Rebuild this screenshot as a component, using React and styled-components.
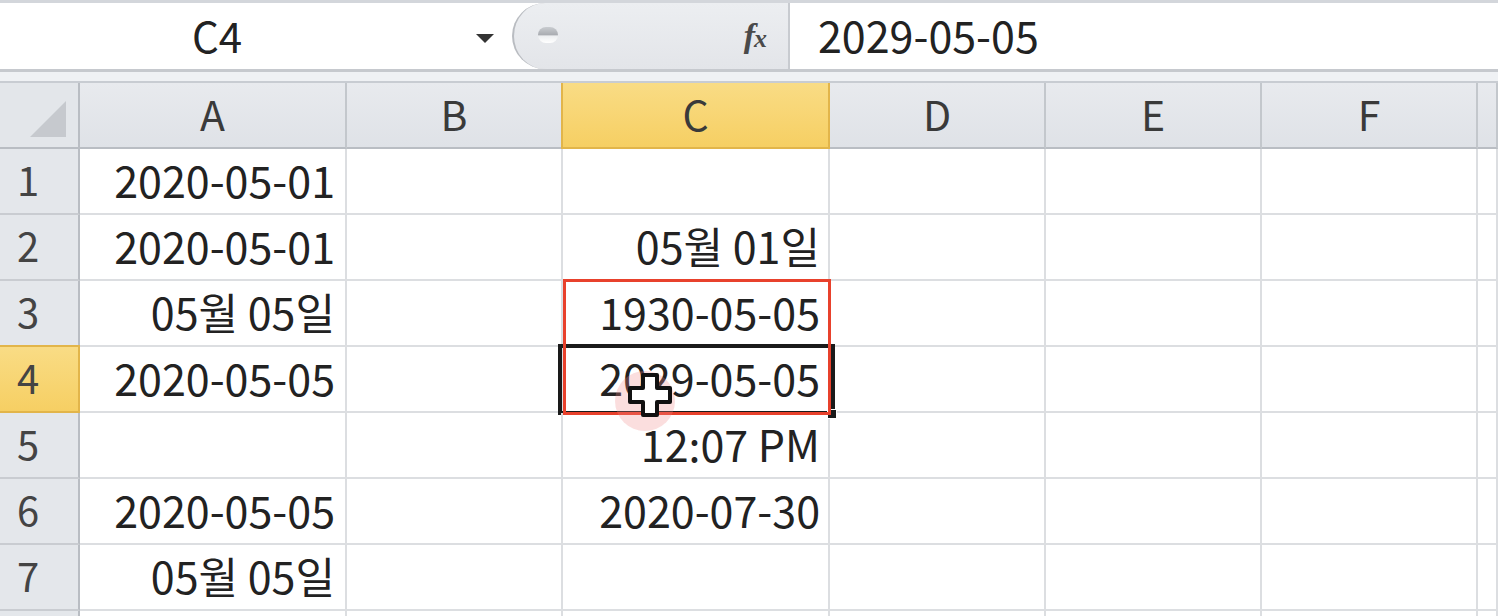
import React from 'react'
import styled, { createGlobalStyle } from 'styled-components'

const GlobalStyle = createGlobalStyle`
  html, body { margin: 0; padding: 0; background: #fff; overflow: hidden; }
  body { font-family: "Noto Sans CJK KR", "Noto Sans", sans-serif; }
`

const Page = styled.div`
  width: 1498px;
  height: 616px;
  overflow: hidden;
  position: relative;
  background: #fff;
`

const FormulaBar = styled.div`
  display: flex;
  height: 66px;
  border-top: 3px solid #d3d6db;
  border-bottom: 3px solid #c6c9ce;
  background: #fff;
`

const NameBox = styled.div`
  width: 512px;
  display: flex;
  align-items: center;
  position: relative;
  font-size: 42px;
  color: #222;
  padding-bottom: 4px;
  box-sizing: border-box;
  span { margin-left: 192px; }
`

const DropArrow = styled.div`
  position: absolute;
  left: 476px;
  top: 31px;
  width: 0;
  height: 0;
  border-left: 9px solid transparent;
  border-right: 9px solid transparent;
  border-top: 9px solid #333;
`

const FxArea = styled.div`
  width: 278px;
  position: relative;
  background: linear-gradient(#eceef1, #e3e5e9);
  border-radius: 40px 0 0 40px;
  border-left: 2px solid #b9bcc1;
  border-right: 2px solid #c8cbd0;
  display: flex;
  align-items: center;
  justify-content: flex-end;
  box-sizing: border-box;
`

const Grip = styled.div`
  position: absolute;
  left: 24px;
  top: 24px;
  width: 20px;
  height: 16px;
  border-radius: 8px;
  background: linear-gradient(#c9ccd0 0%, #a9acb1 50%, #eceef0 55%, #fff 100%);
`

const Fx = styled.div`
  font-family: "Liberation Serif", serif;
  font-style: italic;
  font-weight: bold;
  font-size: 34px;
  color: #4a4a4a;
  margin-right: 22px;
  letter-spacing: -1px;
  span { font-size: 26px; }
`

const FormulaInput = styled.div`
  flex: 1;
  display: flex;
  align-items: center;
  padding-left: 28px;
  padding-bottom: 4px;
  font-size: 43px;
  color: #222;
`

const Gap = styled.div`
  height: 9px;
  background: #eff1f4;
  border-bottom: 2px solid #c8ccd2;
`

const Sheet = styled.div`
  position: relative;
  display: grid;
  grid-template-columns: 80px 267px 216px 267px 216px 216px 216px 1fr;
  grid-auto-rows: 66px;
`

const Corner = styled.div`
  background: #e3e6ea;
  border-right: 2px solid #b9bdc3;
  border-bottom: 2px solid #b9bdc3;
  position: relative;
  &::after {
    content: '';
    position: absolute;
    right: 12px;
    bottom: 10px;
    width: 0;
    height: 0;
    border-left: 36px solid transparent;
    border-bottom: 36px solid #c6c9ce;
  }
`

const ColHead = styled.div`
  background: ${p => (p.$active ? 'linear-gradient(#f9dc85, #f6cf63)' : 'linear-gradient(#e8eaee, #dfe2e7)')};
  border-right: 2px solid ${p => (p.$active ? '#e2b54a' : '#c3c7cc')};
  border-bottom: 2px solid ${p => (p.$active ? '#e2b54a' : '#b9bdc3')};
  ${p => p.$active && 'border-left: 2px solid #e2b54a; margin-left: -2px;'}
  display: flex;
  align-items: center;
  justify-content: center;
  padding-bottom: 4px;
  font-size: 41px;
  color: #3a3a3a;
`

const RowHead = styled.div`
  background: ${p => (p.$active ? 'linear-gradient(#f9dc85, #f6cf63)' : '#e4e7eb')};
  border-right: 2px solid ${p => (p.$active ? '#e2b54a' : '#b9bdc3')};
  border-bottom: 2px solid ${p => (p.$active ? '#e2b54a' : '#c9ccd1')};
  ${p => p.$active && 'border-top: 2px solid #e2b54a; margin-top: -2px;'}
  display: flex;
  align-items: center;
  justify-content: center;
  padding-right: 22px;
  padding-bottom: 4px;
  font-size: 40px;
  color: #444;
`

const Cell = styled.div`
  position: relative;
  border-right: 2px solid #dcdee1;
  border-bottom: 2px solid #dcdee1;
  display: flex;
  align-items: center;
  justify-content: flex-end;
  padding-right: ${p => (p.$wide ? 8 : 10)}px;
  padding-bottom: 4px;
  font-size: 43px;
  color: #222;
  white-space: nowrap;
  ${p =>
    p.$selected &&
    `
    &::after {
      content: '';
      position: absolute;
      left: -5px; top: -3px; right: -7px; bottom: -4px;
      border: 4px solid #1a1a1a;
    }
    &::before {
      content: '';
      position: absolute;
      right: -9px; bottom: -8px;
      width: 8px; height: 8px;
      background: #1a1a1a;
      border: 1px solid #fff;
      z-index: 2;
    }
  `}
`

const Highlight = styled.div`
  position: absolute;
  left: 563px;
  top: 196px;
  width: 268px;
  height: 136px;
  border: 3px solid #e8412c;
  box-sizing: border-box;
  pointer-events: none;
  z-index: 3;
`

const Cursor = styled.svg`
  position: absolute;
  left: 605px;
  top: 262px;
  z-index: 4;
`

const columns = ['A', 'B', 'C', 'D', 'E', 'F', '']

const rows = [
  ['2020-05-01', '', '', '', '', '', ''],
  ['2020-05-01', '', '05월 01일', '', '', '', ''],
  ['05월 05일', '', '1930-05-05', '', '', '', ''],
  ['2020-05-05', '', '2029-05-05', '', '', '', ''],
  ['', '', '12:07 PM', '', '', '', ''],
  ['2020-05-05', '', '2020-07-30', '', '', '', ''],
  ['05월 05일', '', '', '', '', '', ''],
  ['', '', '', '', '', '', ''],
]

export default function App() {
  return (
    <Page>
      <GlobalStyle />
      <FormulaBar>
        <NameBox>
          <span>C4</span>
          <DropArrow />
        </NameBox>
        <FxArea>
          <Grip />
          <Fx>
            f<span>x</span>
          </Fx>
        </FxArea>
        <FormulaInput>2029-05-05</FormulaInput>
      </FormulaBar>
      <Gap />
      <Sheet>
        <Corner />
        {columns.map((c, i) => (
          <ColHead key={i} $active={c === 'C'}>
            {c}
          </ColHead>
        ))}
        {rows.map((r, ri) => (
          <React.Fragment key={ri}>
            {/* row 8 sits below the fold, its number is not visible */}
            <RowHead $active={ri === 3}>{ri < 7 ? ri + 1 : ''}</RowHead>
            {r.map((v, ci) => (
              <Cell key={ci} $wide={ci === 2} $selected={ri === 3 && ci === 2}>
                {v}
              </Cell>
            ))}
          </React.Fragment>
        ))}
        <Highlight />
        <Cursor width="96" height="96" viewBox="0 0 96 96">
          <circle cx="40" cy="56" r="30" fill="#f08a8a" opacity="0.28" />
          <path
            d="M38 30 h14 v13 h13 v14 h-13 v13 h-14 v-13 h-13 v-14 h13 z"
            fill="#fff"
            stroke="#111"
            strokeWidth="4"
            strokeLinejoin="round"
          />
        </Cursor>
      </Sheet>
    </Page>
  )
}
